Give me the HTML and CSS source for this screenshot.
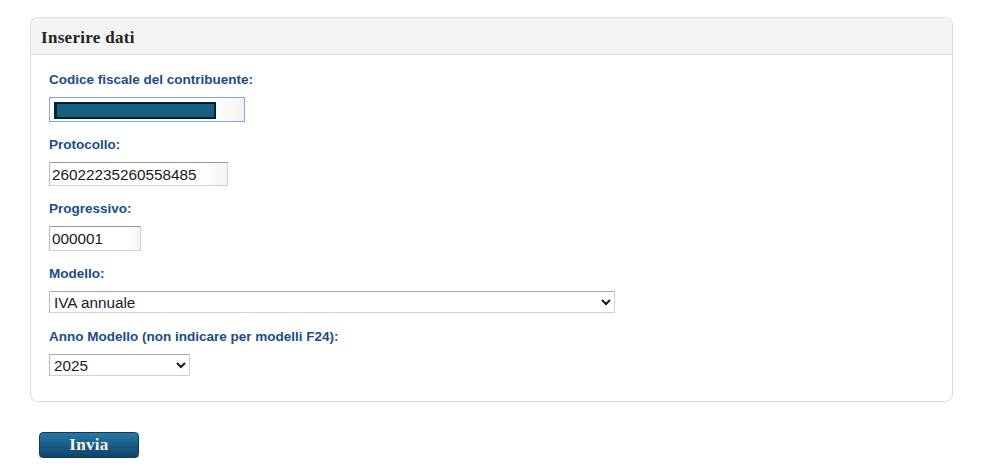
FILE: index.html
```html
<!DOCTYPE html>
<html lang="it">
<head>
<meta charset="utf-8">
<title>Inserire dati</title>
<link rel="stylesheet" href="styles.css">
</head>
<body>
<div class="page">
  <section class="panel">
    <header class="panel-head">Inserire dati</header>
    <div class="panel-body">
      <div class="field">
        <label class="lbl" for="cf">Codice fiscale del contribuente:</label>
        <div class="cf-wrap">
          <input id="cf" class="inp inp-cf focus" type="text" value="">
          <span class="redact"></span>
        </div>
      </div>
      <div class="field">
        <label class="lbl" for="prot">Protocollo:</label>
        <input id="prot" class="inp inp-prot" type="text" value="26022235260558485">
      </div>
      <div class="field">
        <label class="lbl" for="prog">Progressivo:</label>
        <input id="prog" class="inp inp-prog" type="text" value="000001">
      </div>
      <div class="field">
        <label class="lbl" for="mod">Modello:</label>
        <select id="mod" class="sel sel-mod">
          <option>IVA annuale</option>
        </select>
      </div>
      <div class="field last">
        <label class="lbl" for="anno">Anno Modello (non indicare per modelli F24):</label>
        <select id="anno" class="sel sel-anno">
          <option>2025</option>
        </select>
      </div>
    </div>
  </section>
  <div class="actions">
    <button class="btn" type="button">Invia</button>
  </div>
</div>
</body>
</html>
```

FILE: styles.css
```css
html, body {
  margin: 0;
  padding: 0;
  background: #ffffff;
}

.page {
  padding: 17px 0 0 30px;
  width: 923px;
}

.panel {
  border: 1px solid #dcdcdc;
  border-radius: 8px;
  background: #ffffff;
  box-shadow: 0 0 1px rgba(0,0,0,0.05);
}

.panel-head {
  height: 37px;
  box-sizing: border-box;
  padding: 10px 0 0 10px;
  background: #f4f4f4;
  border-bottom: 1px solid #dedede;
  border-radius: 8px 8px 0 0;
  font-family: "Liberation Serif", "Times New Roman", serif;
  font-weight: bold;
  font-size: 17px;
  letter-spacing: 0.3px;
  line-height: 19px;
  color: #222222;
}

.panel-body {
  display: flex;
  flex-direction: column;
  gap: 15px;
  padding: 17px 18px 25px 18px;
}

.field {
  display: flex;
  flex-direction: column;
  align-items: flex-start;
  gap: 9px;
}

.field.last {
  margin-top: 1px;
}

.lbl {
  font-family: "Liberation Sans", Arial, sans-serif;
  font-weight: bold;
  font-size: 13.5px;
  line-height: 16px;
  color: #1b4d86;
}

.inp {
  box-sizing: border-box;
  height: 24px;
  margin: 0;
  padding: 1px 2px 0 2px;
  border: 1px solid #d2d2d2;
  border-top-color: #9a9a9a;
  border-left-color: #b8b8b8;
  background: linear-gradient(to right, #ffffff 85%, #f4f4f4);
  font-family: "Liberation Sans", Arial, sans-serif;
  font-size: 15.3px;
  color: #1a1a1a;
  outline: none;
}

.cf-wrap {
  position: relative;
}

.inp-cf {
  width: 196px;
  height: 25px;
  border: 1px solid #7ea8d4;
  background: linear-gradient(to right, #ffffff 85%, #f2f2f2);
}

.redact {
  position: absolute;
  left: 5px;
  top: 5px;
  width: 162px;
  height: 17px;
  box-sizing: border-box;
  background: #17607f;
  border: 2px solid #07202c;
  border-left-width: 3px;
}

.inp-prot {
  width: 179px;
}

.inp-prog {
  width: 92px;
  height: 25px;
}

.sel {
  box-sizing: border-box;
  height: 22px;
  margin: 0;
  padding: 0;
  border: 1px solid #d0d0d0;
  border-top-color: #a8a8a8;
  border-left-color: #b8b8b8;
  border-radius: 0;
  background: #ffffff;
  font-family: "Liberation Sans", Arial, sans-serif;
  font-size: 15.3px;
  color: #1a1a1a;
}

.sel-mod {
  width: 566px;
}

.sel-anno {
  width: 141px;
}

.actions {
  padding: 30px 0 0 9px;
}

.btn {
  width: 100px;
  height: 26px;
  margin: 0;
  padding: 0 0 1px 0;
  border: 1px solid #0d3b5a;
  border-radius: 4px;
  background: linear-gradient(to bottom, #2a77a4 0%, #1b5f8a 45%, #0e4569 100%);
  font-family: "Liberation Serif", "Times New Roman", serif;
  font-weight: bold;
  font-size: 17px;
  letter-spacing: 0.3px;
  color: #f4f4ec;
  box-shadow: 0 1px 1px rgba(0,0,0,0.25);
}
```
